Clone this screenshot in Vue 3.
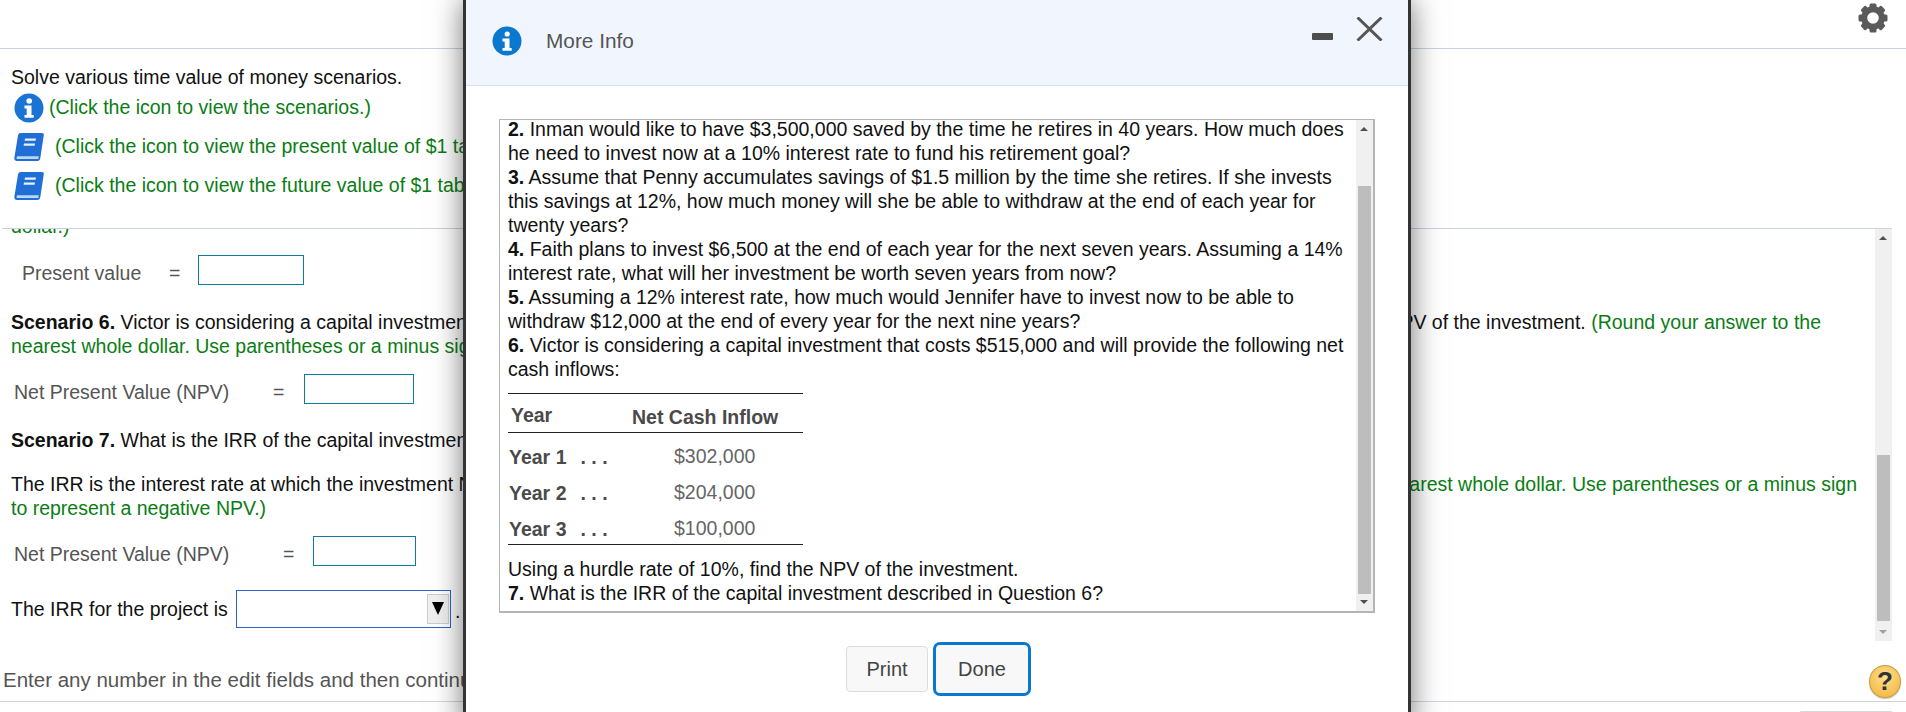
<script setup>
const gearTeeth = [0, 45, 90, 135, 180, 225, 270, 315]
const cashRows = [
  { year: 'Year 1', amount: '$302,000' },
  { year: 'Year 2', amount: '$204,000' },
  { year: 'Year 3', amount: '$100,000' }
]
</script>

<template>
  <div class="page">
    <header class="topbar">
      <svg class="gear" width="30" height="30" viewBox="0 0 30 30">
        <rect v-for="deg in gearTeeth" :key="deg" x="11.5" y="0.5" width="7" height="6" rx="1.5" fill="#5a5a5a" :transform="`rotate(${deg} 15 15)`" />
        <circle cx="15" cy="15" r="8.8" fill="none" stroke="#5a5a5a" stroke-width="6" />
      </svg>
    </header>

    <section class="intro">
      <p class="line">Solve various time value of money scenarios.</p>
      <div class="hint first">
        <svg class="icon" width="30" height="30" viewBox="0 0 30 30">
          <circle cx="15" cy="15" r="14.5" fill="#1b74d3" />
          <circle cx="15.2" cy="8" r="2.8" fill="#fff" />
          <path d="M10.5 12.5h7v9.5h2.2v2.8h-9.2V22h2.2v-6.6h-2.2z" fill="#fff" />
        </svg>
        <span class="green">(Click the icon to view the scenarios.)</span>
      </div>
      <div class="hint book-row">
        <svg class="icon" width="30" height="30" viewBox="0 0 30 30">
          <path d="M7 1h21c1.3 0 2 .8 1.800 2L26.300 26c-.3 1.800-1.300 3-3 3H3c-2 0-3-1.500-2.600-3.500L4 3.500C4.400 1.800 5.400 1 7 1z" fill="#1f6fd6" />
          <path d="M2.500 25.800c.1-.9.800-1.500 1.700-1.500h20.600l-.5 2.600H3.300c-.6 0-.9-.5-.8-1.100z" fill="#bcd6f5" />
          <path d="M11 6.500h11l-.4 2.200h-11zM10 11.500h11l-.4 2.200h-11z" fill="#e8f1fc" />
        </svg>
        <span class="green">(Click the icon to view the present value of $1 table.)</span>
      </div>
      <div class="hint book-row">
        <svg class="icon" width="30" height="30" viewBox="0 0 30 30">
          <path d="M7 1h21c1.3 0 2 .8 1.800 2L26.300 26c-.3 1.800-1.300 3-3 3H3c-2 0-3-1.500-2.600-3.500L4 3.500C4.400 1.800 5.400 1 7 1z" fill="#1f6fd6" />
          <path d="M2.500 25.800c.1-.9.800-1.500 1.700-1.500h20.600l-.5 2.600H3.300c-.6 0-.9-.5-.8-1.100z" fill="#bcd6f5" />
          <path d="M11 6.500h11l-.4 2.200h-11zM10 11.500h11l-.4 2.200h-11z" fill="#e8f1fc" />
        </svg>
        <span class="green">(Click the icon to view the future value of $1 table.)</span>
      </div>
    </section>

    <section class="work">
      <div class="work-scroll">
        <p class="line green clipped">dollar.)</p>

        <div class="form-row pv">
          <span class="label">Present value</span>
          <span class="eq">=</span>
          <input class="amount" type="text" />
        </div>

        <div class="split scenario-six">
          <span><b>Scenario 6.</b> Victor is considering a capital investment</span>
          <span>NPV of the investment. <span class="green">(Round your answer to the</span></span>
        </div>
        <p class="line green">nearest whole dollar. Use parentheses or a minus sign to represent a negative NPV.)</p>

        <div class="form-row npv">
          <span class="label">Net Present Value (NPV)</span>
          <span class="eq">=</span>
          <input class="amount" type="text" />
        </div>

        <p class="line scenario-seven"><b>Scenario 7.</b> What is the IRR of the capital investment</p>

        <div class="split irr-text">
          <span>The IRR is the interest rate at which the investment NPV</span>
          <span class="green">to the nearest whole dollar. Use parentheses or a minus sign</span>
        </div>
        <p class="line green">to represent a negative NPV.)</p>

        <div class="form-row npv-two">
          <span class="label">Net Present Value (NPV)</span>
          <span class="eq">=</span>
          <input class="amount" type="text" />
        </div>

        <div class="irr-row">
          <span class="irr-label">The IRR for the project is</span>
          <div class="select-box">
            <span class="select-btn"><i class="select-arrow"></i></span>
          </div>
          <span class="period">.</span>
        </div>
      </div>
      <div class="scrollbar page-bar">
        <i class="arrow-up"></i>
        <i class="thumb"></i>
        <i class="arrow-down"></i>
      </div>
    </section>

    <footer class="footer">
      <div class="footer-text">
        <span class="footer-copy">Enter any number in the edit fields and then continue to the next question.</span>
        <span class="help">?</span>
      </div>
      <div class="footer-rest"><span class="peek"></span></div>
    </footer>

    <div class="modal">
      <div class="modal-head">
        <svg width="30" height="30" viewBox="0 0 30 30">
          <circle cx="15" cy="15" r="14.5" fill="#0b78d0" />
          <circle cx="15.200" cy="8" r="2.600" fill="#fff" />
          <path d="M10.500 12.500h7v9.500h2.200v2.800h-9.200V22h2.200v-6.600h-2.200z" fill="#fff" />
        </svg>
        <span class="modal-title">More Info</span>
        <span class="minimize"></span>
        <svg class="close" width="27" height="24" viewBox="0 0 27 24">
          <path d="M1.500 .5L25.500 23.500M25.500 .5L1.500 23.500" stroke="#555" stroke-width="3" fill="none" />
        </svg>
      </div>

      <div class="info-box">
        <div class="info-text">
          <p><b>2.</b> Inman would like to have $3,500,000 saved by the time he retires in 40 years. How much does he need to invest now at a 10% interest rate to fund his retirement goal?</p>
          <p><b>3.</b> Assume that Penny accumulates savings of $1.5 million by the time she retires. If she invests this savings at 12%, how much money will she be able to withdraw at the end of each year for twenty years?</p>
          <p><b>4.</b> Faith plans to invest $6,500 at the end of each year for the next seven years. Assuming a 14% interest rate, what will her investment be worth seven years from now?</p>
          <p><b>5.</b> Assuming a 12% interest rate, how much would Jennifer have to invest now to be able to withdraw $12,000 at the end of every year for the next nine years?</p>
          <p><b>6.</b> Victor is considering a capital investment that costs $515,000 and will provide the following net cash inflows:</p>
          <table class="cash">
            <thead>
              <tr>
                <th class="year-head">Year</th>
                <th class="cash-head">Net Cash Inflow</th>
              </tr>
            </thead>
            <tbody>
              <tr v-for="row in cashRows" :key="row.year">
                <td class="year-cell">{{ row.year }}<span class="dots">. . .</span></td>
                <td class="amount-cell">{{ row.amount }}</td>
              </tr>
            </tbody>
          </table>
          <p>Using a hurdle rate of 10%, find the NPV of the investment.</p>
          <p><b>7.</b> What is the IRR of the capital investment described in Question 6?</p>
        </div>
        <div class="scrollbar box-bar">
          <i class="arrow-up"></i>
          <i class="thumb"></i>
          <i class="arrow-down"></i>
        </div>
      </div>

      <div class="modal-actions">
        <button class="btn" type="button">Print</button>
        <button class="btn done" type="button">Done</button>
      </div>
    </div>
  </div>
</template>

<style>
html, body {
  margin: 0;
  background: #fff;
}
</style>

<style scoped>
.page {
  position: relative;
  width: 1906px;
  height: 712px;
  overflow: hidden;
  display: flex;
  flex-direction: column;
  font-family: "Liberation Sans", Arial, sans-serif;
  font-size: 19.5px;
  line-height: 24px;
  color: #111;
  background: #fff;
}
p {
  margin: 0;
}
.line {
  white-space: nowrap;
}
.green {
  color: #0a7d14;
}
.topbar {
  height: 48px;
  flex: none;
  border-bottom: 1px solid #c9d2e3;
  display: flex;
  justify-content: flex-end;
  align-items: flex-start;
  padding-right: 18px;
  box-sizing: content-box;
}
.gear {
  margin-top: 3px;
}
.intro {
  height: 179px;
  flex: none;
  padding: 16px 0 0 11px;
  box-sizing: border-box;
}
.hint {
  display: flex;
  align-items: center;
  white-space: nowrap;
  height: 30px;
  margin-left: 3px;
}
.hint.first {
  margin-top: 4px;
  gap: 5px;
}
.hint span {
  position: relative;
  top: -1px;
}
.book-row {
  margin-top: 9px;
  gap: 11px;
}
.work {
  flex: none;
  height: 412px;
  margin-left: 2px;
  border-top: 1px solid #c9d2e3;
  display: flex;
  margin-right: 14px;
  box-sizing: content-box;
}
.work-scroll {
  flex: 1;
  overflow: hidden;
  padding-left: 9px;
  min-width: 0;
}
.clipped {
  margin-top: -15px;
}
.form-row {
  display: flex;
  align-items: center;
  color: #555;
  height: 30px;
  white-space: nowrap;
}
.label,
.eq {
  padding-top: 5px;
}
.pv {
  margin: 17px 0 0 11px;
}
.pv .label { width: 147px; }
.pv .eq { width: 29px; }
.pv .amount { width: 106px; }
.npv {
  margin: 16px 0 0 3px;
}
.npv .label { width: 259px; }
.npv .eq { width: 31px; }
.npv .amount { width: 110px; }
.npv-two {
  margin: 16px 0 0 3px;
}
.npv-two .label { width: 269px; }
.npv-two .eq { width: 30px; }
.npv-two .amount { width: 103px; }
.amount {
  height: 30px;
  box-sizing: border-box;
  border: 1px solid #0e7c9c;
  background: #fff;
  padding: 0;
  margin: 0;
  outline: none;
}
.split {
  display: flex;
  justify-content: space-between;
  white-space: nowrap;
}
.scenario-six {
  margin-top: 25px;
  width: 1810px;
}
.scenario-seven {
  margin-top: 24px;
}
.irr-text {
  margin-top: 20px;
  width: 1846px;
}
.irr-row {
  display: flex;
  align-items: center;
  margin-top: 24px;
  white-space: nowrap;
}
.irr-label {
  width: 225px;
}
.select-box {
  width: 215px;
  height: 38px;
  box-sizing: border-box;
  border: 1px solid #2a63c9;
  display: flex;
  justify-content: flex-end;
  align-items: center;
  padding-right: 1px;
}
.select-btn {
  width: 22px;
  height: 30px;
  box-sizing: border-box;
  border: 1px solid #ccc;
  background: #f0f0f0;
  display: flex;
  justify-content: center;
  padding-top: 7px;
}
.select-arrow {
  width: 0;
  height: 0;
  border-left: 6px solid transparent;
  border-right: 6px solid transparent;
  border-top: 13px solid #000;
}
.period {
  margin-left: 4px;
  position: relative;
  top: 2px;
}
.scrollbar {
  flex: none;
  width: 17px;
  background: #f0f0f0;
  display: flex;
  flex-direction: column;
  align-items: center;
  position: relative;
}
.arrow-up,
.arrow-down {
  position: absolute;
  left: 4px;
  width: 0;
  height: 0;
  border-left: 4px solid transparent;
  border-right: 4px solid transparent;
}
.arrow-up {
  top: 7px;
  border-bottom: 4px solid #505050;
}
.arrow-down {
  bottom: 7px;
  border-top: 4px solid #a0a0a0;
}
.thumb {
  position: absolute;
  left: 2px;
  width: 13px;
  background: #bdbdbd;
}
.page-bar .thumb {
  top: 226px;
  height: 166px;
}
.footer {
  flex: none;
  height: 71px;
  position: relative;
}
.footer-text {
  height: 61px;
  padding: 28px 5px 0 3px;
  box-sizing: border-box;
  display: flex;
  justify-content: space-between;
  align-items: center;
  color: #555;
  font-size: 20.5px;
  white-space: nowrap;
  border-bottom: 1px solid #d3d5dd;
}
.footer-copy {
  position: relative;
  top: -5px;
}
.help {
  width: 32px;
  height: 33px;
  border-radius: 50%;
  box-sizing: border-box;
  border: 1px solid #c49b3f;
  background: radial-gradient(circle at 50% 35%, #fce08e, #f6bc4c 75%, #e2a63a);
  color: #333;
  font-weight: bold;
  font-size: 26px;
  line-height: 31px;
  text-align: center;
  box-shadow: 0 1px 1px rgba(0, 0, 0, 0.25);
  position: relative;
  top: -4px;
}
.footer-rest {
  display: flex;
  justify-content: flex-end;
  padding: 9px 11px 0 0;
}
.peek {
  width: 98px;
  height: 10px;
  border-radius: 5px 5px 0 0;
  background: #d8d8d8;
}

.modal {
  position: absolute;
  left: 463px;
  top: 0;
  width: 948px;
  height: 730px;
  box-sizing: border-box;
  border: solid #333;
  border-width: 0 3px;
  background: #fff;
  box-shadow: 0 0 28px rgba(0, 0, 0, 0.55);
}
.modal-head {
  background: #f1f6fe;
  border-bottom: 1px solid #d3e4f5;
  display: flex;
  align-items: center;
  padding: 0 25px 4px 26px;
  box-sizing: border-box;
  height: 86px;
}
.modal-title {
  margin-left: 24px;
  color: #555;
  font-size: 20.8px;
  flex: 1;
}
.minimize {
  width: 21px;
  height: 7px;
  background: #4d4d4d;
  margin: 0 23px 0 0;
  position: relative;
  top: -4px;
  border-radius: 1px;
}
.close {
  position: relative;
  top: -12px;
}
.info-box {
  margin: 33px 0 0 33px;
  width: 876px;
  height: 494px;
  box-sizing: border-box;
  border: 1px solid #b5b5b5;
  border-width: 1px 2px 2px 1px;
  display: flex;
  overflow: hidden;
}
.info-text {
  flex: 1;
  min-width: 0;
  padding-left: 8px;
  margin-top: -3px;
}
.box-bar .thumb {
  top: 66px;
  height: 408px;
}
.box-bar .arrow-down {
  border-top-color: #505050;
}
.cash {
  width: 295px;
  margin: 12px 0;
  border-collapse: collapse;
  border-top: 1px solid #222;
  border-bottom: 1px solid #222;
  color: #4a4a4a;
}
.cash th {
  height: 39px;
  box-sizing: border-box;
  padding: 5px 0 0;
  border-bottom: 1px solid #222;
  text-align: left;
  font-weight: bold;
}
.cash th.year-head {
  width: 124px;
  padding-left: 3px;
  padding-top: 4px;
}
.cash th.cash-head {
  padding-top: 8px;
}
.cash td {
  height: 36px;
  box-sizing: border-box;
  padding: 12px 0 0;
  vertical-align: top;
}
.cash tr:last-child td {
  height: 39px;
}
.cash td.year-cell {
  font-weight: bold;
  padding-left: 1px;
  white-space: nowrap;
}
.dots {
  margin-left: 14px;
}
.cash td.amount-cell {
  padding: 11px 0 0 42px;
  color: #666;
}
.modal-actions {
  margin: 29px 0 0 380px;
  display: flex;
  align-items: center;
  gap: 5px;
}
.btn {
  width: 82px;
  height: 46px;
  box-sizing: border-box;
  border: 1px solid #ddd;
  border-radius: 4px;
  background: #f8f8f8;
  color: #444;
  font-family: inherit;
  font-size: 20px;
  padding: 0;
}
.done {
  width: 98px;
  height: 54px;
  border: 3px solid #0b78d0;
  border-radius: 7px;
}
</style>
